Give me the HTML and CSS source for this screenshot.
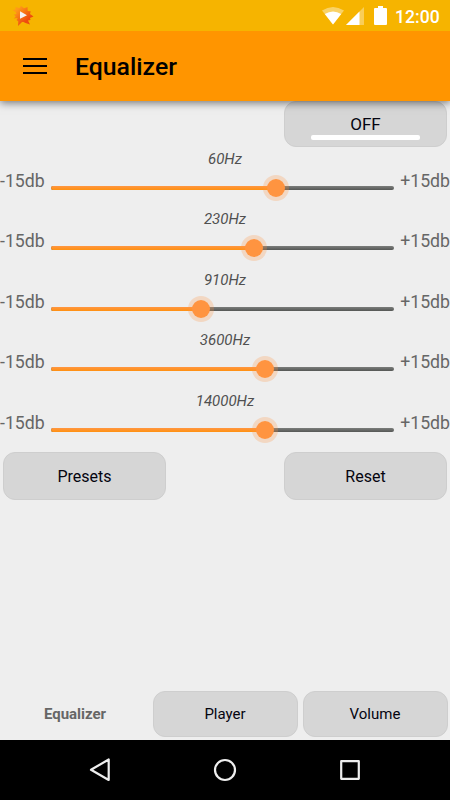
FILE: index.html
```html
<!DOCTYPE html>
<html lang="en">
<head>
  <meta charset="UTF-8" />
  <meta name="viewport" content="width=device-width, initial-scale=1.0"/>
  <title>Equalizer</title>
  <link rel="stylesheet" href="styles.css">
</head>
<body>

<div class="status-bar">
  <svg class="app-logo" width="22" height="22" viewBox="0 0 22 22">
    <defs>
      <linearGradient id="leaf" x1="0" y1="0" x2="1" y2="1">
        <stop offset="0.2" stop-color="#ff9a18"/>
        <stop offset="0.7" stop-color="#ee4c10"/>
      </linearGradient>
    </defs>
    <path fill="url(#leaf)" d="M.5 5L3.500 4.500 3.500 2l4 1L9 .8l3 2.400L15.500 2l.2 4 3 .2-.7 2.800 3.500 2.500-3.500 1.500 .5 2-2.500.5 2 4-4.500-1.500L11.500 17 10 17l-4 4 .3-4.500-1.800-1.500 1.200-2-4 .5 2-2-2-2L4.500 9 3.500 7z"/>
    <path fill="#f4f2f4" d="M8 6.300v7.400l7-3.400z"/>
  </svg>
  <div class="status-icons">
    <svg class="wifi" width="22" height="18" viewBox="0 0 22 18">
      <path fill="#fff" fill-opacity="0.4" d="M0 3.500Q11-3.500 22 3.500L11 17.500z"/>
      <path fill="#fff" d="M2.800 7Q11 1.800 19.200 7L11 17.500z"/>
    </svg>
    <svg class="signal" width="18" height="18" viewBox="0 0 18 18">
      <path fill="#fff" fill-opacity="0.35" d="M18 0v18H0z"/>
      <path fill="#fff" d="M13.500 4.500v13.500H0z"/>
    </svg>
    <svg class="battery" width="13" height="19" viewBox="0 0 13 19">
      <path fill="#fff" d="M4 0h5v2h3q1 0 1 1v15q0 1-1 1H1q-1 0-1-1V3q0-1 1-1h3z"/>
    </svg>
    <span class="clock">12:00</span>
  </div>
</div>

<div class="header">
  <div class="menu-icon"><span></span><span></span><span></span></div>
  <h1>Equalizer</h1>
</div>

<div class="content">
  <div class="switch-row">
    <button class="btn toggle"><span>OFF</span></button>
  </div>

  <div class="band">
    <div class="freq">60Hz</div>
    <div class="slider-row">
      <span class="db">-15db</span>
      <div class="track"><div class="fill" style="width: 65.6%"></div><div class="thumb"></div></div>
      <span class="db">+15db</span>
    </div>
  </div>

  <div class="band">
    <div class="freq">230Hz</div>
    <div class="slider-row">
      <span class="db">-15db</span>
      <div class="track"><div class="fill" style="width: 59.3%"></div><div class="thumb"></div></div>
      <span class="db">+15db</span>
    </div>
  </div>

  <div class="band">
    <div class="freq">910Hz</div>
    <div class="slider-row">
      <span class="db">-15db</span>
      <div class="track"><div class="fill" style="width: 43.6%"></div><div class="thumb"></div></div>
      <span class="db">+15db</span>
    </div>
  </div>

  <div class="band">
    <div class="freq">3600Hz</div>
    <div class="slider-row">
      <span class="db">-15db</span>
      <div class="track"><div class="fill" style="width: 62.5%"></div><div class="thumb"></div></div>
      <span class="db">+15db</span>
    </div>
  </div>

  <div class="band">
    <div class="freq">14000Hz</div>
    <div class="slider-row">
      <span class="db">-15db</span>
      <div class="track"><div class="fill" style="width: 62.5%"></div><div class="thumb"></div></div>
      <span class="db">+15db</span>
    </div>
  </div>

  <div class="actions">
    <button class="btn">Presets</button>
    <button class="btn">Reset</button>
  </div>
</div>

<div class="tabs">
  <div class="tab-active">Equalizer</div>
  <button class="btn">Player</button>
  <button class="btn">Volume</button>
</div>

<div class="nav-bar">
  <svg width="24" height="26" viewBox="0 0 24 26"><path d="M20.700 2.500v20.500L3 12.800z"/></svg>
  <svg width="24" height="26" viewBox="0 0 24 26"><circle cx="12" cy="13" r="10"/></svg>
  <svg width="24" height="26" viewBox="0 0 24 26"><rect x="3.200" y="4.200" width="17.600" height="17.600"/></svg>
</div>

</body>
</html>
```

FILE: styles.css
```css
* {
  box-sizing: border-box;
}

body {
  font-family: Roboto, sans-serif;
  background-color: #eee;
  color: #000;
  margin: 0;
  height: 800px;
  display: flex;
  flex-direction: column;
  overflow: hidden;
}

.status-bar {
  height: 31px;
  background-color: #f6b400;
  display: flex;
  align-items: center;
  justify-content: space-between;
  padding: 0 10px 0 12px;
  z-index: 2;
}

.status-icons {
  display: flex;
  align-items: center;
}

.signal {
  margin-left: 2px;
}

.battery {
  margin-left: 10px;
}

.clock {
  color: #fff;
  font-size: 17.6px;
  font-weight: 500;
  line-height: 20px;
  width: 45px;
  margin-left: 8px;
  margin-top: 2px;
}

.header {
  height: 70px;
  background-color: #ff9500;
  display: flex;
  align-items: center;
  padding: 0 23px;
  box-shadow: 0 2px 8px rgba(0,0,0,0.5);
  z-index: 1;
}

.menu-icon {
  display: flex;
  flex-direction: column;
  gap: 5px;
}

.menu-icon span {
  width: 24px;
  height: 2px;
  background-color: #000;
}

.header h1 {
  margin: 0 0 0 28px;
  font-size: 24.8px;
  font-weight: 500;
}

.content {
  flex: 1;
}

.switch-row {
  display: flex;
  justify-content: flex-end;
  padding-right: 3px;
  height: 48px;
}

.btn {
  font-family: inherit;
  font-size: 16px;
  color: #050510;
  width: 163px;
  height: 48px;
  padding: 1px 0 0;
  background-color: #d6d6d6;
  border: 1px solid #cecece;
  border-radius: 12px;
}

.toggle {
  height: 46px;
  font-size: 17px;
}

.toggle span {
  display: block;
  width: 109px;
  margin: 4px auto 0;
  line-height: 20px;
}

/* state indicator under the label */
.toggle span::after {
  content: "";
  display: block;
  height: 5px;
  margin-top: 1px;
  border-radius: 2px;
  background-color: #fff;
}

.band {
  height: 60.4px;
}

.freq {
  height: 20px;
  line-height: 20px;
  font-size: 15px;
  font-style: italic;
  text-align: center;
  color: #505050;
}

.slider-row {
  display: flex;
  justify-content: space-between;
}

.db {
  width: 51px;
  font-size: 17.7px;
  line-height: 24px;
  color: #666;
}

.db:last-child {
  text-align: right;
}

.track {
  display: flex;
  flex: 1;
  height: 4px;
  margin: 17px 5px 0 0;
  border-radius: 2px;
  background: linear-gradient(#7b7d7b, #555755);
}

.fill {
  height: 4px;
  border-radius: 2px 0 0 2px;
  background: linear-gradient(#ff9642, #ff9010);
}

.thumb {
  flex: none;
  width: 18px;
  height: 18px;
  margin: -7px 0 0 -9px;
  border-radius: 50%;
  background-color: #ff9440;
  box-shadow: 0 0 0 4px rgba(255,148,64,0.25);
}

.actions {
  display: flex;
  justify-content: space-between;
  padding: 1px 3px 0;
}

.tabs {
  display: grid;
  grid-template-columns: repeat(3, 1fr);
  gap: 5px;
  padding: 0 2.5px 3px;
  align-items: center;
}

.tabs .btn {
  width: 100%;
  height: 46px;
  padding: 0;
  font-size: 15px;
}

.tab-active {
  font-size: 15px;
  font-weight: bold;
  text-align: center;
  color: #666;
}

.nav-bar {
  height: 60px;
  background-color: #000;
  display: flex;
  justify-content: center;
  align-items: center;
  gap: 101px;
}

.nav-bar svg {
  fill: none;
  stroke: #eee;
  stroke-width: 2.2;
  stroke-linejoin: round;
}
```
